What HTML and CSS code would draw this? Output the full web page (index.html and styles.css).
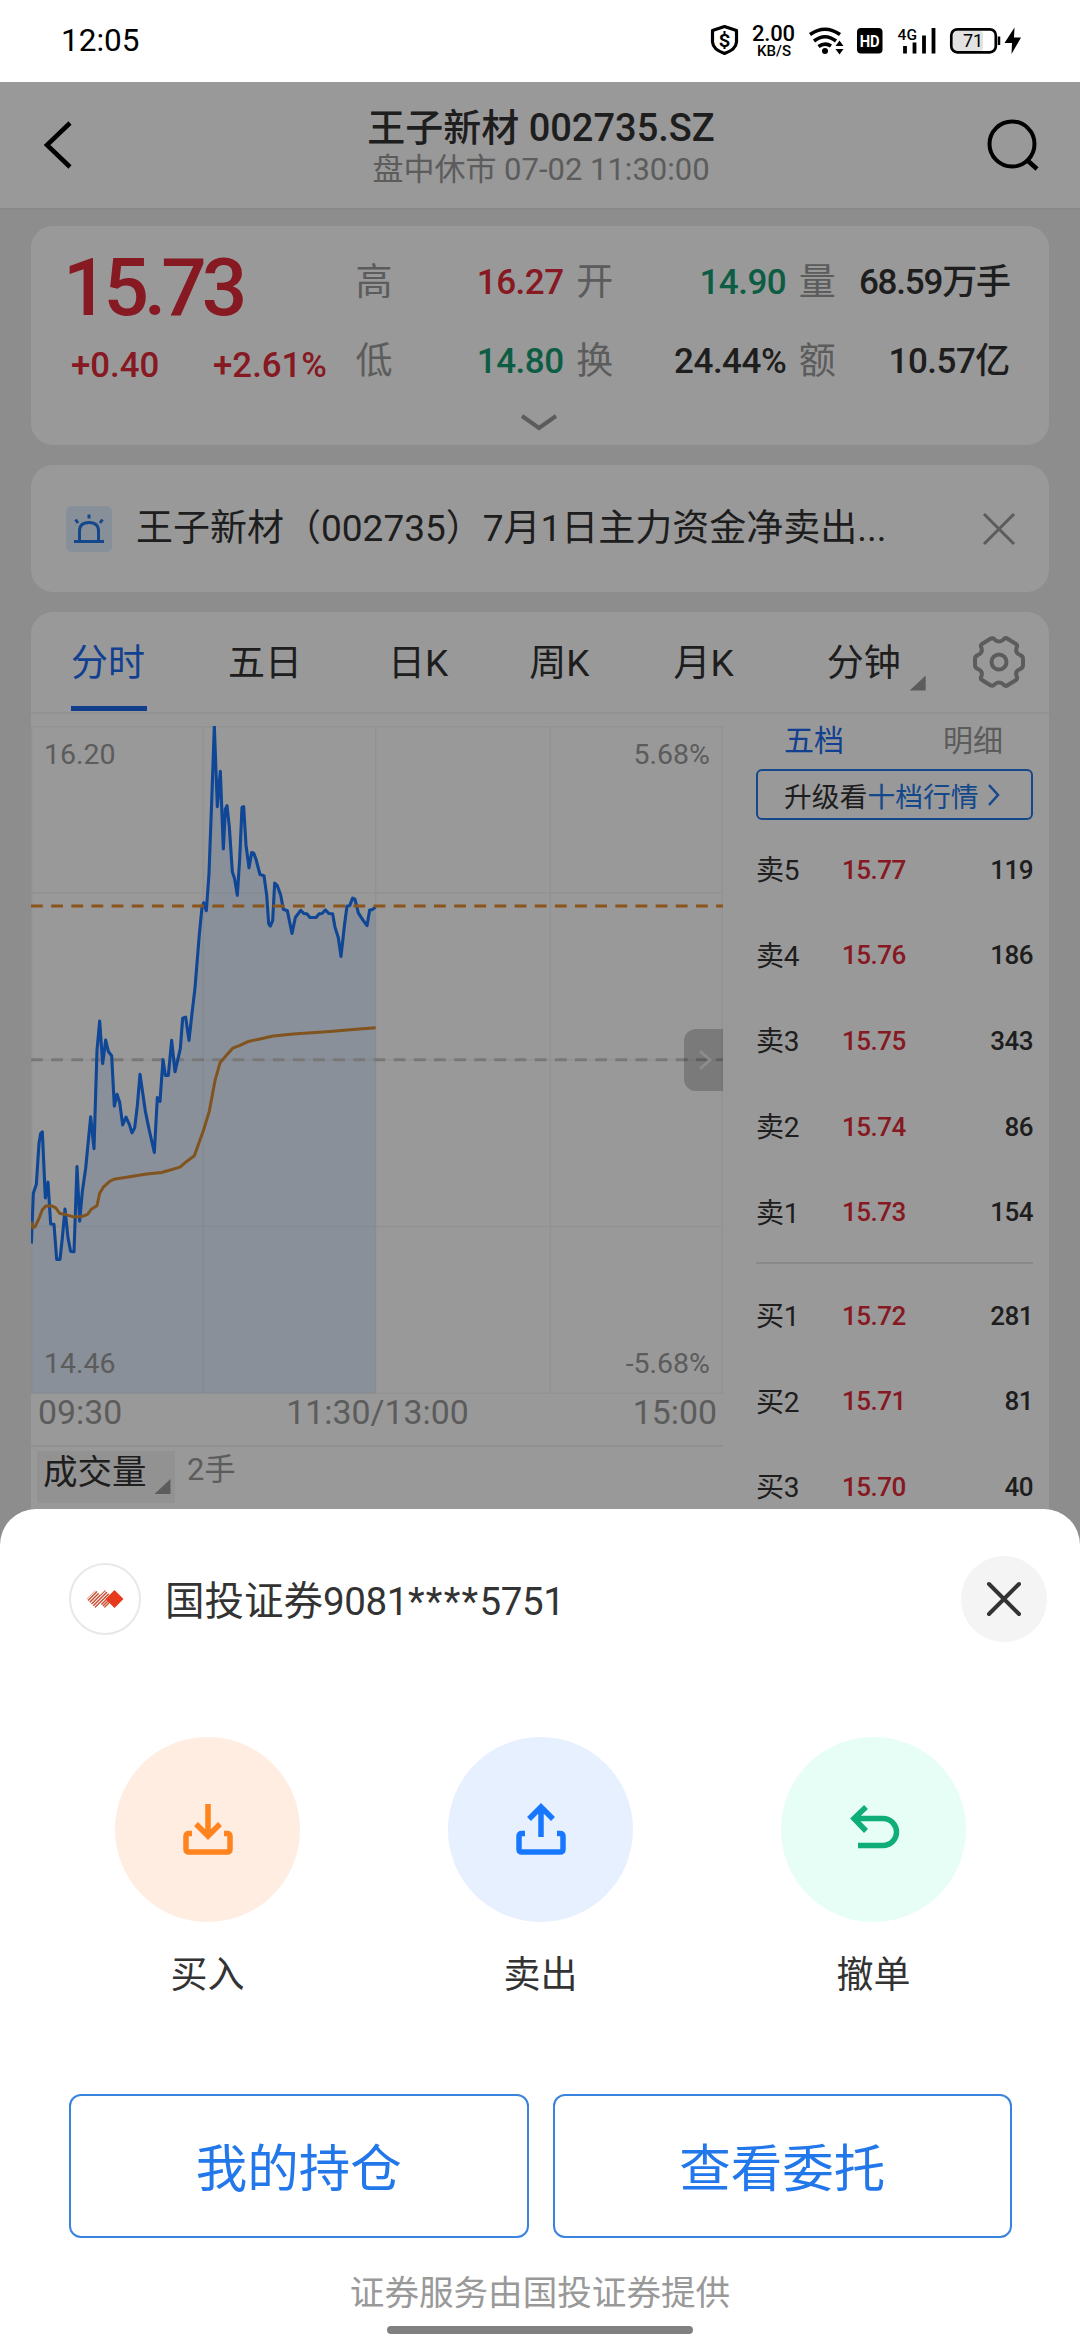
FILE: index.html
```html
<!DOCTYPE html>
<html lang="zh-CN">
<head>
<meta charset="utf-8">
<title>王子新材 002735.SZ</title>
<link rel="stylesheet" href="styles.css">
</head>
<body>
<div class="screen">
  <header class="status">
    <span class="clock">12:05</span>
    <svg class="status-icons" width="320" height="40" viewBox="705 20 320 40">
      <path d="M724.500 26.500L736.500 30.500V42Q736 49.500 724.500 53.500Q713 49.500 712.500 42V30.500Z" fill="none" stroke="#000" stroke-width="3.200" stroke-linejoin="round"/>
      <text x="724.500" y="46.500" font-size="18" font-weight="700" text-anchor="middle">S</text>
      <path d="M724.500 31V34M724.500 46V49" stroke="#000" stroke-width="2"/>
      <text x="773.500" y="41" font-size="22" font-weight="500" text-anchor="middle" textLength="43">2.00</text>
      <text x="774" y="55.500" font-size="15.500" font-weight="500" text-anchor="middle" textLength="34" lengthAdjust="spacingAndGlyphs">KB/S</text>
      <g fill="none" stroke="#000" stroke-width="3.600">
        <path d="M810 34.500Q825 24 840 34.500"/><path d="M814 41Q825 32.500 836 41"/><path d="M818.500 46.500Q825 42 831 46"/>
      </g>
      <circle cx="825" cy="51" r="3"/>
      <path d="M839.500 40.500L843.500 46H835.500ZM839.500 54.500L843.500 49H835.500Z"/>
      <rect x="857" y="28" width="25.500" height="25.500" rx="4"/>
      <text x="869.700" y="47" font-size="17" font-weight="700" text-anchor="middle" fill="#fff" textLength="20" lengthAdjust="spacingAndGlyphs">HD</text>
      <text x="897.500" y="40" font-size="15.500" font-weight="500" textLength="19.500">4G</text>
      <path d="M905 46V53.500M914.500 42.500V53.500M924 35.500V53.500M933.500 28V53.500" stroke="#000" stroke-width="3.800"/>
      <rect x="953" y="31" width="30" height="20" rx="3" fill="#e2e2e2"/>
      <rect x="951.300" y="29.300" width="44.500" height="23" rx="6" fill="none" stroke="#000" stroke-width="2.700"/>
      <path d="M999 36.500V45" stroke="#000" stroke-width="2.500"/>
      <text x="973" y="46.500" font-size="18" text-anchor="middle">71</text>
      <path d="M1014.500 27.500L1004.500 43H1012L1011.500 54L1021 37.500H1014Z"/>
    </svg>
  </header>

  <main class="page">
    <nav class="topbar">
      <svg class="back" width="32" height="50" viewBox="0 0 32 50"><path d="M28 3L5 25L28 47" fill="none" stroke="#000" stroke-width="4.500"/></svg>
      <div class="heading">
        <h1>王子新材 002735.SZ</h1>
        <p>盘中休市 07-02 11:30:00</p>
      </div>
      <svg class="search" width="54" height="54" viewBox="0 0 54 54"><circle cx="27" cy="26" r="22.500" fill="none" stroke="#000" stroke-width="4"/><path d="M42 42L52 51" stroke="#000" stroke-width="4.500"/></svg>
    </nav>

    <section class="card quote">
      <div class="price-row">
        <strong class="price">15.73</strong>
        <div class="cell"><span>高</span><b class="up">16.27</b></div>
        <div class="cell"><span>开</span><b class="down">14.90</b></div>
        <div class="cell tight"><span>量</span><b>68.59万手</b></div>
      </div>
      <div class="price-row second">
        <div class="change"><b class="up">+0.40</b><b class="up">+2.61%</b></div>
        <div class="cell"><span>低</span><b class="down">14.80</b></div>
        <div class="cell"><span>换</span><b>24.44%</b></div>
        <div class="cell"><span>额</span><b>10.57亿</b></div>
      </div>
      <svg class="more" width="40" height="20" viewBox="0 0 40 20"><path d="M3 3L20 15L37 3" fill="none" stroke="#999" stroke-width="4"/></svg>
    </section>

    <section class="card notice">
      <div class="alarm">
        <svg width="46" height="46" viewBox="0 0 46 46" fill="none" stroke="#2378e8" stroke-width="3"><path d="M8 35.500H38M13.500 35V25Q13.500 16.500 23 16.500T32.500 25V35M23 8.500V12.500M9.500 13.500L12 17M36.500 13.500L34 17"/></svg>
      </div>
      <p>王子新材（002735）7月1日主力资金净卖出...</p>
      <svg width="34" height="34" viewBox="0 0 34 34"><path d="M2 2L32 32M32 2L2 32" stroke="#999" stroke-width="3"/></svg>
    </section>

    <section class="card market">
      <div class="tabs">
        <span class="tab active">分时</span><span class="tab">五日</span><span class="tab">日K</span><span class="tab">周K</span><span class="tab">月K</span>
        <span class="tab minutes">分钟<i class="corner"></i></span>
        <svg class="gear" width="54" height="54" viewBox="0 0 54 54" fill="none" stroke="#999" stroke-width="4" stroke-linejoin="round"><path d="M18 4Q21 2 23 5Q27 8 31 5Q33 2 36 4L44 9Q46 10 44.500 13Q43 18 48 20Q51 21 51 24V30Q51 33 48 34Q43 36 44.500 41Q46 44 44 45L36 50Q33 52 31 49Q27 46 23 49Q21 52 18 50L10 45Q8 44 9.500 41Q11 36 6 34Q3 33 3 30V24Q3 21 6 20Q11 18 9.500 13Q8 10 10 9Z"/><circle cx="27" cy="27" r="7.500"/></svg>
      </div>
      <div class="columns">
        <div class="chart-col">
          <div class="chart">
            <svg class="plot" width="692" height="668" viewBox="93 17 2076 1870" preserveAspectRatio="none">
              <g class="grid">
                <path d="M93 19H2169M93 484H2169M93 951H2169M93 1418H2169M93 1885H2169M95 17V1885M610 17V1885M1127 17V1885M1651 17V1885M2167 17V1885"/>
              </g>
              <path class="area" d="M94 1466L100 1325L109 1300L117 1185L122 1158L127 1153L136 1338L144 1294L152 1411L162 1412L170 1510L180 1510L187 1450L195 1369L204 1450L212 1488L222 1489L231 1250L239 1403L247 1320L257 1255L272 1111L282 1200L291 925L299 843L308 962L317 896L325 928L335 940L343 1081L351 1048L359 1070L368 1134L378 1112L388 1132L396 1156L404 1142L412 1080L420 992L436 1095L447 1145L463 1211L472 1057L480 1068L489 951L496 995L505 995L515 897L525 985L541 920L548 835L557 832L567 897L575 830L585 750L598 600L606 525L611 512L619 534L627 430L635 230L643 18L652 243L661 144L670 361L676 250L681 240L688 300L697 425L704 445L712 491L719 390L726 245L731 243L738 350L747 414L755 371L761 373L768 390L780 433L792 436L800 490L806 570L811 577L818 562L824 457L832 464L842 490L850 530L862 534L876 598L886 553L902 533L912 542L921 543L930 553L948 553L957 543L966 542L976 532L987 542L998 543L1005 580L1015 610L1023 662L1034 570L1041 521L1049 520L1058 499L1065 502L1075 540L1090 562L1101 576L1109 532L1117 531L1127 524V1885H94Z"/>
              <path class="ref" d="M93 951H2169"/>
              <path class="line" d="M94 1466L100 1325L109 1300L117 1185L122 1158L127 1153L136 1338L144 1294L152 1411L162 1412L170 1510L180 1510L187 1450L195 1369L204 1450L212 1488L222 1489L231 1250L239 1403L247 1320L257 1255L272 1111L282 1200L291 925L299 843L308 962L317 896L325 928L335 940L343 1081L351 1048L359 1070L368 1134L378 1112L388 1132L396 1156L404 1142L412 1080L420 992L436 1095L447 1145L463 1211L472 1057L480 1068L489 951L496 995L505 995L515 897L525 985L541 920L548 835L557 832L567 897L575 830L585 750L598 600L606 525L611 512L619 534L627 430L635 230L643 18L652 243L661 144L670 361L676 250L681 240L688 300L697 425L704 445L712 491L719 390L726 245L731 243L738 350L747 414L755 371L761 373L768 390L780 433L792 436L800 490L806 570L811 577L818 562L824 457L832 464L842 490L850 530L862 534L876 598L886 553L902 533L912 542L921 543L930 553L948 553L957 543L966 542L976 532L987 542L998 543L1005 580L1015 610L1023 662L1034 570L1041 521L1049 520L1058 499L1065 502L1075 540L1090 562L1101 576L1109 532L1117 531L1127 524"/>
              <path class="avg" d="M94 1405L98 1421L105 1419L115 1400L127 1371L137 1361H157L167 1366L180 1382L195 1384L220 1391L245 1390L262 1385L275 1369L291 1360L299 1325L310 1308L330 1291L345 1285L380 1280L440 1271L485 1267L540 1252L560 1236L583 1220L610 1150L628 1095L645 1010L660 960L680 938L698 919L720 911L742 901L780 893L820 885L880 879L990 872L1050 867L1127 862"/>
              <path class="now" d="M93 521H2169"/>
            </svg>
            <div class="scale"><span>16.20</span><span>5.68%</span></div>
            <div class="scale"><span>14.46</span><span>-5.68%</span></div>
            <div class="expander"><svg width="16" height="24" viewBox="0 0 16 24"><path d="M3 4L12 12L3 20" fill="none" stroke="#fff" stroke-opacity=".6" stroke-width="2.800" stroke-linecap="round"/></svg></div>
          </div>
          <div class="times"><span>09:30</span><span>11:30/13:00</span><span>15:00</span></div>
          <div class="volume"><span class="picker">成交量<i class="corner"></i></span><span class="lots">2手</span></div>
        </div>
        <aside class="book">
          <div class="book-tabs"><span class="on">五档</span><span>明细</span></div>
          <div class="upgrade">升级看<em>十档行情</em><svg width="14" height="24" viewBox="0 0 14 24"><path d="M2 2L11 12L2 22" fill="none" stroke="#2378e8" stroke-width="2.500"/></svg></div>
          <div class="rows">
            <div class="row"><span>卖5</span><b class="up">15.77</b><b>119</b></div>
            <div class="row"><span>卖4</span><b class="up">15.76</b><b>186</b></div>
            <div class="row"><span>卖3</span><b class="up">15.75</b><b>343</b></div>
            <div class="row"><span>卖2</span><b class="up">15.74</b><b>86</b></div>
            <div class="row"><span>卖1</span><b class="up">15.73</b><b>154</b></div>
          </div>
          <div class="rows buy">
            <div class="row"><span>买1</span><b class="up">15.72</b><b>281</b></div>
            <div class="row"><span>买2</span><b class="up">15.71</b><b>81</b></div>
            <div class="row"><span>买3</span><b class="up">15.70</b><b>40</b></div>
          </div>
        </aside>
      </div>
    </section>
  </main>

  <div class="mask"></div>

  <section class="sheet">
    <div class="account">
      <div class="logo">
        <svg width="38" height="18" viewBox="0 0 38 18">
          <defs><clipPath id="diamonds"><path d="M9.500 0L18.500 9L9.500 18L.5 9ZM19 0L28 9L19 18L10 9Z"/></clipPath></defs>
          <path clip-path="url(#diamonds)" d="M-3 12L9 0M-.5 13L12.500 0M1.500 14.500L16 0M3 16.500L19.500 0M5 18L23 0M8.500 18L26.500 0M12 18L30 0M14.500 18.500L30 3M17 19L30 6" fill="none" stroke="#c94f33" stroke-width="1.500"/>
          <path d="M28.500 0L37.500 9L28.500 18L19.500 9Z" fill="#e6391d"/>
        </svg>
      </div>
      <p>国投证券<span>9081<em>****</em>5751</span></p>
      <div class="close"><svg width="36" height="36" viewBox="0 0 36 36"><path d="M3 3L33 33M33 3L3 33" stroke="#333" stroke-width="4" stroke-linecap="round"/></svg></div>
    </div>
    <div class="actions">
      <div class="action">
        <div class="disc orange"><svg width="56" height="56" viewBox="0 0 56 56" fill="none" stroke="#ff831f" stroke-width="5.500"><path d="M28 2V33M16 22L28 34L40 22M12 31.500H9Q6 31.500 6 34.500V47Q6 50 9 50H47Q50 50 50 47V34.500Q50 31.500 47 31.500H44"/></svg></div>
        <span>买入</span>
      </div>
      <div class="action">
        <div class="disc blue"><svg width="56" height="56" viewBox="0 0 56 56" fill="none" stroke="#1877ff" stroke-width="5.500"><path d="M28 5V35M16 17L28 5L40 17M12 31.500H9Q6 31.500 6 34.500V47Q6 50 9 50H47Q50 50 50 47V34.500Q50 31.500 47 31.500H44"/></svg></div>
        <span>卖出</span>
      </div>
      <div class="action">
        <div class="disc green"><svg width="56" height="56" viewBox="0 0 56 56" fill="none" stroke="#0fad78" stroke-width="5.500"><path d="M20 5L8 16.500L20 29M8 16.500H37A13 13 0 0 1 37 43.500H12"/></svg></div>
        <span>撤单</span>
      </div>
    </div>
    <div class="buttons"><span class="btn">我的持仓</span><span class="btn">查看委托</span></div>
    <p class="provider">证券服务由国投证券提供</p>
    <div class="home-bar"></div>
  </section>
</div>
</body>
</html>
```

FILE: styles.css
```css
* { box-sizing: border-box; margin: 0; padding: 0; }
body { font-family: Roboto, "Noto Sans CJK SC", sans-serif; color: #333; background: #fff; }
svg { display: block; flex: none; }
b, strong { font-weight: 500; }
i, em { font-style: normal; }

.screen { position: relative; width: 1080px; height: 2340px; overflow: hidden; }
.status { display: flex; justify-content: space-between; height: 82px; padding: 20px 55px 0 61px; color: #000; }
.clock { font-size: 31.5px; line-height: 42px; }

.page { height: 2258px; background: #ebebeb; }
.topbar { display: flex; align-items: center; justify-content: space-between; height: 128px; padding: 0 41px 0 42px; background: #fff; border-bottom: 2px solid #e4e4e4; }
.heading { padding: 5px 0 0 23px; text-align: center; }
.heading h1 { font-size: 38px; font-weight: 500; line-height: 44px; }
.heading p { font-size: 31px; line-height: 40px; color: #999; }

.card { width: 1018px; margin: 0 auto; background: #fff; border-radius: 22px; }
.up { color: #df2a38; }
.down { color: #169b73; }

.quote { height: 219px; margin-top: 16px; padding: 12px 39px 0 37px; }
.price-row { display: grid; grid-template-columns: 275px 208px 210px 211px; column-gap: 12.600px; align-items: center; height: 79px; }
.price-row.second { height: 89px; }
.price { font-size: 80px; line-height: 80px; letter-spacing: -5px; margin-left: -5px; color: #df2a38; padding-top: 10px; }
.cell { display: flex; justify-content: space-between; font-size: 35px; line-height: 40px; white-space: nowrap; letter-spacing: -.5px; }
.cell.tight { letter-spacing: -1.2px; }
.cell span { font-size: 37px; color: #999; }
.change { display: flex; justify-content: space-between; padding: 6px 17px 0 3px; font-size: 34.8px; line-height: 40px; width: 276px; }
.more { margin: 7px auto 0; }

.notice { display: flex; align-items: center; height: 127px; margin-top: 20px; padding: 0 33px 0 35px; font-size: 37px; line-height: 50px; }
.notice p { flex: 1; padding-left: 24px; white-space: nowrap; }
.alarm { width: 46px; height: 46px; border-radius: 6px; background: #e2effe; }

.market { height: 930px; margin-top: 20px; }
.tabs { display: flex; align-items: center; height: 102px; padding: 0 23px 0 40px; border-bottom: 2px solid #f4f4f4; font-size: 37px; line-height: 50px; }
.tab { display: flex; align-items: center; position: relative; height: 100px; margin-right: 83px; padding-top: 3px; }
.tab:nth-child(2) { margin-right: 86px; }
.tab:nth-child(3) { margin-right: 81px; }
.tab:nth-child(4) { margin-right: 84px; }
.tab:nth-child(5) { margin-right: 93px; }
.tab.active { color: #1c6bef; }
.tab.active::after { content: ""; position: absolute; left: 0; bottom: 1px; width: 76px; height: 5px; background: #1c66e9; }
.corner { display: block; width: 16px; height: 15px; background: #999; clip-path: polygon(100% 0, 100% 100%, 0 100%); }
.tab.minutes { margin-right: 0; gap: 9px; }
.minutes .corner { margin-top: 39px; }
.gear { margin-left: auto; }

.columns { display: flex; justify-content: space-between; padding-right: 16px; }
.chart-col { width: 692px; padding-top: 12px; }
.chart { position: relative; display: flex; flex-direction: column; justify-content: space-between; height: 668px; padding: 12px 13px 13px 13px; }
.plot { position: absolute; left: 0; top: 0; }
.plot path { fill: none; vector-effect: non-scaling-stroke; stroke-linejoin: round; }
.plot .grid path { stroke: #f3f3f3; stroke-width: 1.5px; }
.plot .area { fill: rgba(0, 120, 255, .1); }
.plot .line { stroke: #1976f8; stroke-width: 3.1px; }
.plot .avg { stroke: #d68a35; stroke-width: 3px; }
.plot .now { stroke: #e68c2f; stroke-width: 3px; stroke-dasharray: 11.8 8.350; }
.plot .ref { stroke: #c8c8c8; stroke-width: 3px; stroke-dasharray: 11.8 8.350; }
.scale { position: relative; display: flex; justify-content: space-between; font-size: 28.5px; line-height: 34px; color: #999; }
.expander { position: absolute; right: 0; top: 303px; display: flex; align-items: center; justify-content: center; width: 39px; height: 62px; padding-left: 5px; border-radius: 12px 0 0 12px; background: rgba(0, 0, 0, .2); }
.times { display: flex; justify-content: space-between; height: 53px; padding: 0 6px 0 7px; border-bottom: 2px solid #f0f0f0; font-size: 33.8px; line-height: 38px; color: #999; }
.volume { display: flex; gap: 12px; padding: 4px 6px; }
.picker { display: flex; gap: 8px; width: 138px; height: 52px; padding-left: 6px; background: #f3f3f3; font-size: 34.5px; line-height: 42px; }
.picker .corner { margin-top: 28px; }
.lots { font-size: 31px; line-height: 37px; color: #999; }

.book { width: 277px; padding-top: 5px; }
.book-tabs { display: flex; justify-content: space-between; padding: 0 30px 0 28px; font-size: 30px; line-height: 44px; color: #999; }
.book-tabs .on { color: #1c6bef; }
.upgrade { display: flex; align-items: center; height: 51px; margin-top: 6px; padding-left: 26px; border: 2px solid #2378e8; border-radius: 6px; font-size: 27.8px; white-space: nowrap; }
.upgrade em { color: #2378e8; }
.upgrade svg { margin-left: 8px; }
.rows { padding-top: 7px; }
.rows.buy { margin-top: 7px; padding-top: 9px; border-top: 2px solid #e4e4e4; }
.row { display: grid; grid-template-columns: 86px 1fr auto; align-items: center; height: 85.600px; font-size: 26px; line-height: 36px; letter-spacing: -.5px; }
.row span { font-size: 28px; letter-spacing: -.3px; padding-top: 3px; }

.mask { position: absolute; left: 0; top: 82px; width: 1080px; height: 2258px; background: rgba(0, 0, 0, .4); }

.sheet { position: absolute; left: 0; top: 1509px; width: 1080px; height: 831px; padding-top: 47px; background: #fff; border-radius: 36px 36px 0 0; }
.account { display: flex; align-items: center; height: 86px; padding: 0 33px 0 69px; font-size: 39.5px; line-height: 50px; }
.logo { display: flex; align-items: center; justify-content: center; width: 72px; height: 72px; border: 2px solid #e8e8e8; border-radius: 50%; }
.account p { flex: 1; padding: 5px 0 0 24px; }
.account span { font-size: 38.5px; letter-spacing: -.4px; }
.account em { letter-spacing: 1.3px; }
.close { display: flex; align-items: center; justify-content: center; width: 86px; height: 86px; border-radius: 50%; background: #f4f4f4; }
.actions { display: flex; justify-content: space-between; margin-top: 95px; padding: 0 114px 0 115px; }
.action { display: flex; flex-direction: column; align-items: center; gap: 29px; font-size: 37px; line-height: 50px; }
.disc { display: flex; align-items: center; justify-content: center; width: 185px; height: 185px; border-radius: 50%; }
.orange { background: #feede0; }
.blue { background: #e6f0ff; }
.green { background: #e6fef6; }
.buttons { display: flex; gap: 24px; margin-top: 93px; padding: 0 68px 0 69px; }
.btn { flex: 1; height: 144px; padding-top: 4px; border: 2px solid #3a84df; border-radius: 12px; font-size: 51.5px; line-height: 140px; text-align: center; color: #2277ea; }
.provider { margin-top: 30px; font-size: 34.6px; line-height: 50px; text-align: center; color: #999; }
.home-bar { width: 306px; height: 8px; margin: 8px auto 0; border-radius: 4px; background: #808080; }
```
